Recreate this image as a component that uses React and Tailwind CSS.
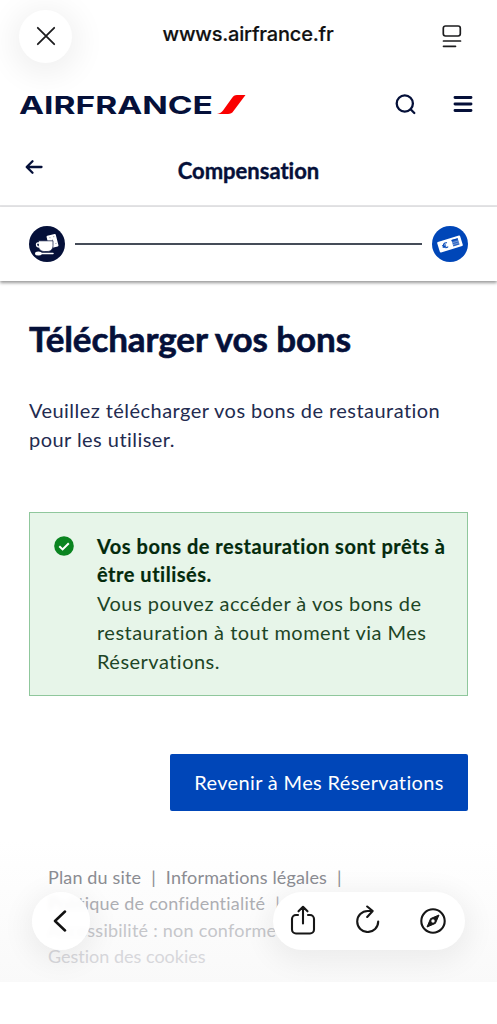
const BrowserBar = () => {
  return (
    <div className="flex h-[72px] items-center px-[19px]">
      <button
        aria-label="Fermer"
        className="flex size-[53px] shrink-0 items-center justify-center rounded-full bg-white shadow-[0_5px_30px_8px_rgba(0,0,0,0.06)]"
      >
        <svg width="20" height="20" viewBox="0 0 20 20" fill="none" stroke="#1c1c1e" strokeWidth="1.8" strokeLinecap="round">
          <path d="M1.8 1.8 18.2 18.2M18.2 1.8 1.8 18.2" />
        </svg>
      </button>
      <p className="flex-1 pr-[1px] pb-1 text-center font-['Inter',sans-serif] text-[20px] font-medium tracking-[-0.2px] text-[#111] [-webkit-text-stroke:0.2px]">
        wwws.airfrance.fr
      </p>
      <div className="flex w-[53px] justify-center">
        <svg width="20" height="24" viewBox="0 0 20 24" fill="none" stroke="#1c1c1e" strokeWidth="1.7" strokeLinecap="round">
          <rect x="1.3" y="2" width="17" height="10" rx="2.2" />
          <path d="M1.5 17h17M1.5 22.3h12" />
        </svg>
      </div>
    </div>
  );
};

const SiteHeader = () => {
  return (
    <header className="flex h-16 items-center pl-5">
      <svg className="overflow-visible" width="226" height="36" viewBox="0 -6 226 36">
        <text
          x="-1"
          y="22"
          textLength="194"
          lengthAdjust="spacingAndGlyphs"
          className="fill-[#051039] font-['Inter',sans-serif] text-[24px] font-bold"
        >
          AIRFRANCE
        </text>
        <path d="M197 22c3-.5 4.500-1.500 6-3.500l9-12.500c1.300-1.800 2.500-3 5-3h8.500L213.500 19c-1.500 2.200-3 3-5.500 3z" fill="#fa0000" />
      </svg>
      <div className="ml-auto flex items-center gap-[37px] pr-6">
        <svg width="22" height="22" viewBox="0 0 22 22" fill="none" stroke="#051039" strokeWidth="2.300" strokeLinecap="round">
          <circle cx="10.800" cy="10.500" r="8.100" />
          <path d="m16.600 16.300 3.700 3.700" />
        </svg>
        <svg width="20" height="18" viewBox="0 0 20 18" fill="none" stroke="#051039" strokeWidth="2.900" strokeLinecap="round">
          <path d="M2 2.500h16M2 9h16M2 15.500h16" />
        </svg>
      </div>
    </header>
  );
};

const TitleBar = () => {
  return (
    <div className="flex h-[71px] items-center border-b-2 border-[#e4e4e6] px-[25px]">
      <svg className="mb-2 shrink-0" width="18" height="16" viewBox="0 0 18 16" fill="none" stroke="#051039" strokeWidth="2.300" strokeLinecap="round" strokeLinejoin="round">
        <path d="M16.500 8H2M7.500 2.200 1.700 8l5.800 5.800" />
      </svg>
      <h2 className="flex-1 pr-[18px] text-center text-[22px] font-bold text-[#051039] [-webkit-text-stroke:0.4px]">
        Compensation
      </h2>
    </div>
  );
};

const Stepper = () => {
  return (
    <div className="flex h-[74px] items-center gap-[10px] px-[29px] shadow-[0_2px_3px_rgba(0,0,0,0.4)]">
      <svg className="shrink-0" width="36" height="36" viewBox="0 0 36 36">
        <circle cx="18" cy="18" r="18" fill="#051039" />
        <g transform="rotate(-14 24 14)">
          <rect x="18.500" y="8.500" width="9.500" height="13" rx="1" fill="#fff" />
          <path d="M21.500 11h.1M25.500 11h.1M23.500 14h.1M26 18h.1" stroke="#6d7288" strokeWidth="1" strokeLinecap="round" />
        </g>
        <path d="M9.500 14.800H24v4.700c0 4-2.500 6-6 6h-2.500c-3.500 0-6-2-6-6z" fill="#fff" stroke="#051039" strokeWidth=".7" />
        <path d="M10.500 17H8.900c-1 0-1.400.6-1.400 1.500 0 1.600 1.300 2.600 3.200 2.600" fill="none" stroke="#fff" strokeWidth="1.300" />
        <ellipse cx="9.400" cy="27.500" rx="3.400" ry="2" fill="#fff" />
        <path d="M11 27.500h13" stroke="#fff" strokeWidth="1.500" strokeLinecap="round" />
      </svg>
      <div className="h-[1.500px] flex-1 bg-[#454c58]" />
      <svg className="shrink-0" width="36" height="36" viewBox="0 0 36 36">
        <circle cx="18" cy="18" r="18" fill="#0046b8" />
        <g transform="rotate(-17 18 18)">
          <rect x="6" y="12.500" width="24" height="11" rx="1" fill="#fff" />
          <path d="M15.500 16c-2.800-1.200-4.200.4-4.200 2s1.400 3.200 4.200 2M10 17.400h3.800M10 18.900h3.800" fill="none" stroke="#0046b8" strokeWidth="1" />
          <rect x="20.500" y="14.700" width="6.500" height="6.600" fill="#2f66c4" />
          <path d="M20.500 15.300h6.500" stroke="#0046b8" strokeWidth="1.200" />
          <path d="M20.500 17.500h6.500M20.500 19.500h6.500" stroke="#a9c2ea" strokeWidth=".5" />
        </g>
      </svg>
    </div>
  );
};

const ReadyAlert = () => {
  return (
    <div className="mt-[58px] flex h-[184px] border border-[#8fc79c] bg-[#e7f5e9] pt-[19px] pl-6 text-[#1d4526]">
      <svg className="mt-1 mr-[23px] shrink-0" width="20" height="20" viewBox="0 0 20 20">
        <circle cx="10" cy="10" r="9.800" fill="#0a8420" />
        <path d="m5.300 10.200 3.300 3.200 6.200-6.200" fill="none" stroke="#fff" strokeWidth="2" />
      </svg>
      <div className="text-[20px] leading-[28.800px] whitespace-nowrap">
        <p className="font-bold tracking-[0.52px] text-[#032a0c] [-webkit-text-stroke:0.2px]">
          Vos bons de restauration sont prêts à
          <br />
          être utilisés.
        </p>
        <p className="tracking-[0.48px]">
          Vous pouvez accéder à vos bons de
          <br />
          restauration à tout moment via Mes
          <br />
          Réservations.
        </p>
      </div>
    </div>
  );
};

const Footer = () => {
  return (
    <footer className="mt-[30px] h-36 bg-linear-to-b from-white to-[#f9f9f9] pt-[23px] pl-12 text-[18px] leading-[26.500px] tracking-[0.15px] whitespace-nowrap">
      <p className="text-[#8b8c92]">
        Plan du site<span className="mx-[10px]">|</span>Informations légales<span className="mx-[10px]">|</span>
      </p>
      <p className="tracking-[0.22px] text-[#adaeb3]">
        Politique de confidentialité<span className="mx-[10px]">|</span>
      </p>
      <p className="tracking-[0.25px] text-[#c5c6ca]">Accessibilité : non conforme</p>
      <p className="tracking-[0px] text-[#d7d7db]">Gestion des cookies</p>
    </footer>
  );
};

const BottomToolbar = () => {
  return (
    <div className="absolute inset-x-0 top-[892px] flex justify-between px-8">
      <button
        aria-label="Retour"
        className="flex size-[58px] items-center justify-center rounded-full bg-white/90 shadow-[0_6px_28px_6px_rgba(0,0,0,0.06)] backdrop-blur-[2px]"
      >
        <svg className="mr-[2px]" width="14" height="22" viewBox="0 0 14 22" fill="none" stroke="#111" strokeWidth="2.500" strokeLinecap="round" strokeLinejoin="round">
          <path d="M12 1.500 2 11l10 9.500" />
        </svg>
      </button>
      <div className="flex h-[58px] w-[192px] items-center justify-between rounded-full bg-white pr-[19px] pl-[17px] shadow-[0_6px_28px_6px_rgba(0,0,0,0.06)]">
        <svg className="mb-[2px]" width="26" height="30" viewBox="0 0 26 30" fill="none" stroke="#161616" strokeWidth="2.100" strokeLinecap="round" strokeLinejoin="round">
          <path d="M8 10H6a4 4 0 0 0-4 4v10.500a4 4 0 0 0 4 4h14a4 4 0 0 0 4-4V14a4 4 0 0 0-4-4h-2M13 18.500V2M8.500 6.300 13 1.800l4.500 4.500" />
        </svg>
        <svg className="mb-[4px]" width="26" height="28" viewBox="0 0 26 28" fill="none" stroke="#161616" strokeWidth="2.100" strokeLinecap="round" strokeLinejoin="round">
          <path d="M23.200 16.500A10.500 10.500 0 1 1 12.700 6h5M12.200 1.500 17.700 6l-5.500 6" />
        </svg>
        <svg width="26" height="26" viewBox="0 0 26 26" fill="none" stroke="#161616">
          <circle cx="13" cy="13" r="11.700" strokeWidth="2.100" />
          <path d="M19 7 10.600 10.600 7 19l8.400-3.600z" fill="#161616" strokeWidth="1" strokeLinejoin="round" />
          <circle cx="13" cy="13" r="1.700" fill="#fff" stroke="none" />
        </svg>
      </div>
    </div>
  );
};

const App = () => {
  return (
    <div className="relative h-[1024px] w-[497px] overflow-hidden bg-white font-['Lato',sans-serif] [font-variant-ligatures:none]">
      <BrowserBar />
      <SiteHeader />
      <TitleBar />
      <Stepper />
      <main className="px-[29px] pt-[33px]">
        <h1 className="text-[35px] leading-[48px] font-bold tracking-[-0.1px] whitespace-nowrap text-[#051039] [-webkit-text-stroke:0.6px]">
          Télécharger vos bons
        </h1>
        <p className="mt-[34px] text-[20px] leading-[28.800px] tracking-[0.45px] whitespace-nowrap text-[#232b50]">
          Veuillez télécharger vos bons de restauration
          <br />
          pour les utiliser.
        </p>
        <ReadyAlert />
        <div className="mt-[58px] flex justify-end">
          <button className="h-[57px] w-[298px] rounded-[2px] bg-[#0046b8] text-[20px] tracking-[0.35px] whitespace-nowrap text-white">
            Revenir à Mes Réservations
          </button>
        </div>
      </main>
      <Footer />
      <BottomToolbar />
      {/* safe area under the toolbar */}
      <div className="absolute inset-x-0 top-[982px] h-[42px] bg-white" />
    </div>
  );
};

export default App;
